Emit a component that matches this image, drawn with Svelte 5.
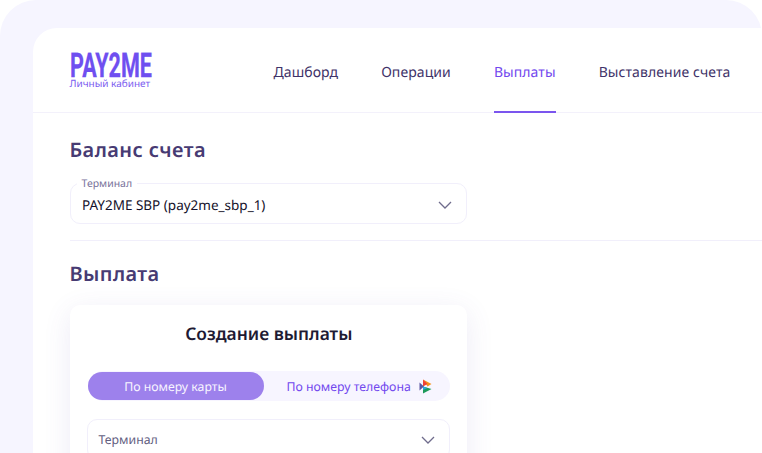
<script>
  const nav = ['Дашборд', 'Операции', 'Выплаты', 'Выставление счета'];
</script>

<div class="page">
  <div class="frame">
    <main class="panel">
      <header class="header">
        <div class="logo">
          <svg class="wordmark" width="82" height="26" viewBox="0 0 82 26">
            <text x="0" y="25" textLength="82" lengthAdjust="spacingAndGlyphs">PAY2ME</text>
          </svg>
          <span class="tagline">Личный кабинет</span>
        </div>
        <nav class="nav">
          {#each nav as item, i}
            <a class="link" class:active={i === 2} href="#top">{item}</a>
          {/each}
        </nav>
      </header>

      <section class="content">
        <h2 class="title">Баланс счета</h2>
        <div class="field">
          <span class="legend">Терминал</span>
          <span class="value">PAY2ME SBP (pay2me_sbp_1)</span>
          <svg class="chev" width="14" height="8" viewBox="0 0 14 8"><path d="M1 1l6 6 6-6" /></svg>
        </div>
        <hr class="rule" />
        <h2 class="title second">Выплата</h2>

        <div class="card">
          <h3 class="card-title">Создание выплаты</h3>
          <div class="tabs">
            <div class="tab on">По номеру карты</div>
            <div class="tab off">
              <span>По номеру телефона</span>
              <svg width="13" height="15" viewBox="0 0 13 15">
                <path fill="#5b57a2" d="M0.5 3.5L5 7.5 0.5 11.5z" />
                <path fill="#f7941d" d="M4 0.5l8.5 4.5L8.5 7.5z" />
                <path fill="#ef4136" d="M4 0.5V7.5l4.5-2.5z" />
                <path fill="#1d9a5a" d="M4 7.5l8.5 2.5L4 14.5z" />
                <path fill="#2aa7df" d="M4 7.5v3.5l4.5-2z" />
              </svg>
            </div>
          </div>
          <div class="select">
            <span>Терминал</span>
            <svg class="chev" width="14" height="8" viewBox="0 0 14 8"><path d="M1 1l6 6 6-6" /></svg>
          </div>
        </div>
      </section>
    </main>
  </div>
</div>

<style>
  :global(body) {
    margin: 0;
    background: #fff;
  }
  .page {
    width: 762px;
    height: 453px;
    overflow: hidden;
    font-family: "Noto Sans", sans-serif;
    text-rendering: geometricPrecision;
  }
  .frame {
    height: 100%;
    box-sizing: border-box;
    padding: 28px 0 0 33px;
    background: #f6f5ff;
    border-radius: 36px 36px 0 0;
  }
  .panel {
    height: 100%;
    background: #fff;
    border-radius: 24px 0 0 0;
  }
  .header {
    display: flex;
    height: 85px;
    box-sizing: border-box;
    padding-left: 36.5px;
    border-bottom: 1px solid #f3f1fb;
  }
  .logo {
    display: flex;
    flex-direction: column;
    width: 204px;
    padding-top: 24px;
  }
  .wordmark {
    display: block;
    overflow: visible;
  }
  .wordmark text {
    font-family: "Roboto", sans-serif;
    font-weight: 700;
    font-size: 34px;
    fill: #6f4ff0;
    stroke: #6f4ff0;
    stroke-width: 0.3;
  }
  .tagline {
    font-size: 10px;
    line-height: 10px;
    color: #7b5cf0;
    white-space: nowrap;
  }
  .nav {
    display: flex;
    gap: 43px;
    white-space: nowrap;
  }
  .link {
    display: block;
    height: 85px;
    box-sizing: border-box;
    padding-top: 35px;
    font-size: 14px;
    line-height: 20px;
    font-weight: 400;
    letter-spacing: 0.08px;
    color: #3f3369;
    text-decoration: none;
  }
  .link.active {
    color: #7248ee;
    border-bottom: 2px solid #7b55ee;
  }
  .content {
    padding-left: 36.5px;
  }
  .title {
    margin: 0;
    padding-top: 23px;
    font-size: 20px;
    line-height: 28px;
    font-weight: 600;
    color: #473b73;
    letter-spacing: 0.4px;
  }
  .field {
    position: relative;
    display: flex;
    align-items: center;
    justify-content: space-between;
    width: 397.5px;
    height: 41px;
    box-sizing: border-box;
    margin-top: 19px;
    padding: 2px 14px 0 11.5px;
    border: 1px solid #f1effb;
    border-radius: 10px;
  }
  .legend {
    position: absolute;
    left: 6px;
    top: -7.5px;
    padding: 0 5px;
    background: #fff;
    font-size: 10.5px;
    line-height: 14px;
    color: #77729a;
  }
  .value {
    font-size: 13.5px;
    font-weight: 400;
    color: #14112a;
    white-space: nowrap;
  }
  .chev path {
    fill: none;
    stroke: #6f6c8c;
    stroke-width: 1.3;
  }
  .rule {
    height: 1px;
    margin: 16px 0 0;
    border: 0;
    background: #f1effb;
  }
  .title.second {
    padding-top: 19px;
  }
  .card {
    width: 397.5px;
    height: 300px;
    box-sizing: border-box;
    margin-top: 17px;
    padding: 17px 17px 0 18px;
    border-radius: 10px;
    background: #fff;
    box-shadow: 0 6px 28px rgba(92, 76, 170, 0.11);
  }
  .card-title {
    margin: 0;
    height: 24px;
    text-align: center;
    font-size: 17.4px;
    line-height: 24px;
    font-weight: 600;
    color: #1e1a33;
  }
  .tabs {
    display: flex;
    height: 30px;
    margin-top: 25px;
    border-radius: 15px;
    background: #f7f5ff;
    font-size: 12.3px;
    font-weight: 400;
  }
  .tab {
    display: flex;
    align-items: center;
    justify-content: center;
    white-space: nowrap;
    border-radius: 15px;
  }
  .tab.on {
    width: 176px;
    margin-top: 1px;
    height: 28px;
    background: #9d81ec;
    color: #f8f5ff;
  }
  .tab.off {
    gap: 8px;
    padding-left: 23px;
    color: #7248ee;
  }
  .select {
    display: flex;
    align-items: center;
    justify-content: space-between;
    height: 41px;
    box-sizing: border-box;
    margin: 18px 0 0 -1px;
    padding: 0 14px 0 11px;
    border: 1px solid #f1effb;
    border-radius: 10px;
    font-size: 12.3px;
    font-weight: 400;
    color: #63607f;
  }
</style>
